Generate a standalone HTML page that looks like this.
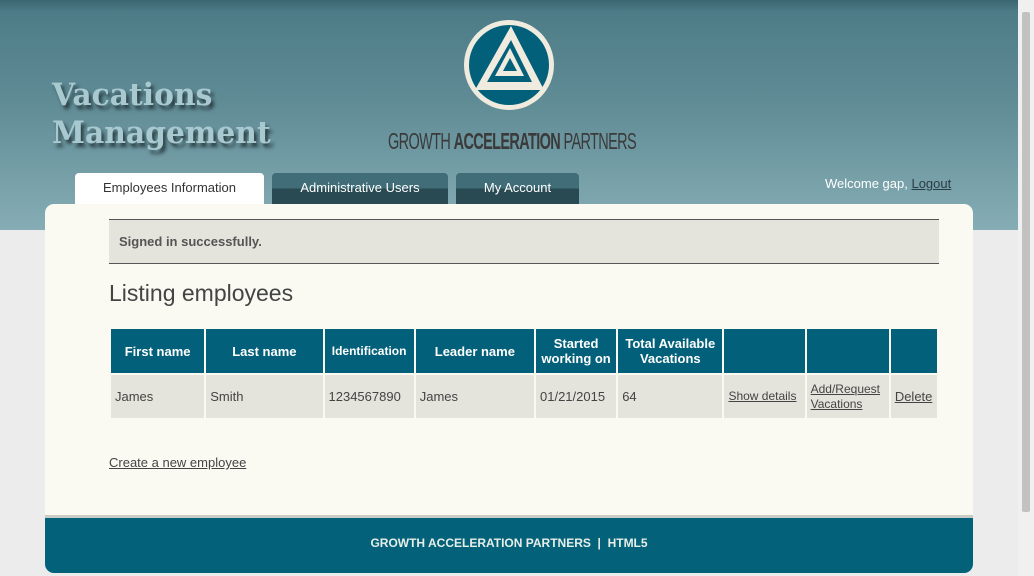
<!DOCTYPE html>
<html><head><style>
*{margin:0;padding:0;box-sizing:border-box}
body{width:1034px;height:576px;overflow:hidden;background:#ececec;font-family:"Liberation Sans",sans-serif;font-size:13px;color:#444;position:relative}
#hdr{position:absolute;left:0;top:0;width:1018px;height:230px;background:linear-gradient(#3a6670 0px,#4d7c87 12px,#5f8b95 100px,#86adb5 230px)}
#sb{position:absolute;left:1018px;top:0;width:16px;height:576px;background:#f0f0f0}
#sb div{position:absolute;left:4px;top:12px;width:8px;height:500px;background:#c2c2c2;border-radius:2px}
.title{position:absolute;left:52px;top:76px;font-family:"DejaVu Serif","Liberation Serif",serif;font-weight:bold;font-size:31px;line-height:38px;color:#a9c9d0;text-shadow:3px 4px 4px #2b3f44;transform:scaleX(.96);transform-origin:left}
.logo{position:absolute;left:462px;top:18px}
.gap{position:absolute;left:388px;top:128px;font-family:"Liberation Sans",sans-serif;font-size:23px;color:#3a3a3a;letter-spacing:-1px;transform:scaleX(.63);transform-origin:left;white-space:nowrap}
.tab{position:absolute;top:173px;height:31px;border-radius:4px 4px 0 0;text-align:center;line-height:29px;font-size:13px;color:#fff;background:linear-gradient(#406d78 50%,#294a53 50%)}
.welcome{position:absolute;left:825px;top:176px;color:#fff;font-size:13px}
.welcome a{color:#2b3d44;text-decoration:underline}
#main{position:absolute;left:45px;top:204px;width:928px;height:369px;background:#fafaf3;border-radius:9px;overflow:hidden}
.flash{position:absolute;left:64px;top:15px;width:830px;height:45px;background:#e4e3dc;border-top:1px solid #555;border-bottom:1px solid #555;padding:14px 10px;font-weight:bold;color:#555}
h1{position:absolute;left:64px;top:76px;font-weight:normal;font-size:23px;color:#444}
table{position:absolute;left:64px;top:123px;border-collapse:separate;border-spacing:2px;table-layout:fixed;width:830px}
th{background:#03607a;color:#fff;height:44px;font-size:13px;line-height:15px;padding:0 2px;font-weight:bold}
td{background:#e4e3dc;height:43px;padding:0 4px;font-size:13px;line-height:15px;white-space:nowrap}
td a,.create{color:#444;text-decoration:underline}
.create{position:absolute;left:64px;top:251px}
#ft{position:absolute;left:0;top:311px;width:928px;height:58px;background:#03627a;border-top:3px solid #c9cbc6;color:#e8eee8;text-align:center;line-height:50px;font-size:12px;letter-spacing:0;font-weight:bold}
</style></head><body>
<div id="hdr"></div>
<div id="sb"><div></div></div>
<div class="title">Vacations<br>Management</div>
<svg class="logo" width="94" height="94" viewBox="0 0 94 94">
<circle cx="47" cy="47" r="45" fill="#efebdf"/><circle cx="47" cy="47" r="40" fill="#03607a"/>
<path d="M49 8 L82 72 L13 72 Z M49 22 L70 64 L25 64 Z" fill="#efebdf" fill-rule="evenodd"/>
<path d="M48 30 L62 58 L33 58 Z M48 40 L55 53 L41 53 Z" fill="#efebdf" fill-rule="evenodd"/>
</svg>
<div class="gap">GROWTH <b>ACCELERATION</b> PARTNERS</div>
<div class="tab" style="left:75px;width:189px;background:#fff;color:#333">Employees Information</div>
<div class="tab" style="left:272px;width:176px">Administrative Users</div>
<div class="tab" style="left:456px;width:123px">My Account</div>
<div class="welcome">Welcome gap, <a>Logout</a></div>
<div id="main">
<div class="flash">Signed in successfully.</div>
<h1>Listing employees</h1>
<table>
<colgroup><col style="width:93px"><col style="width:116px"><col style="width:89px"><col style="width:118px"><col style="width:80px"><col style="width:104px"><col style="width:80px"><col style="width:82px"><col style="width:46px"></colgroup>
<tr><th>First name</th><th>Last name</th><th style="font-size:12px">Identification</th><th>Leader name</th><th>Started<br>working on</th><th>Total Available<br>Vacations</th><th></th><th></th><th></th></tr>
<tr><td>James</td><td>Smith</td><td>1234567890</td><td>James</td><td>01/21/2015</td><td>64</td><td style="font-size:12px"><a>Show details</a></td><td style="font-size:12px"><a>Add/Request<br>Vacations</a></td><td><a>Delete</a></td></tr>
</table>
<a class="create">Create a new employee</a>
<div id="ft">GROWTH ACCELERATION PARTNERS &nbsp;| &nbsp;HTML5</div>
</div>
</body></html>
